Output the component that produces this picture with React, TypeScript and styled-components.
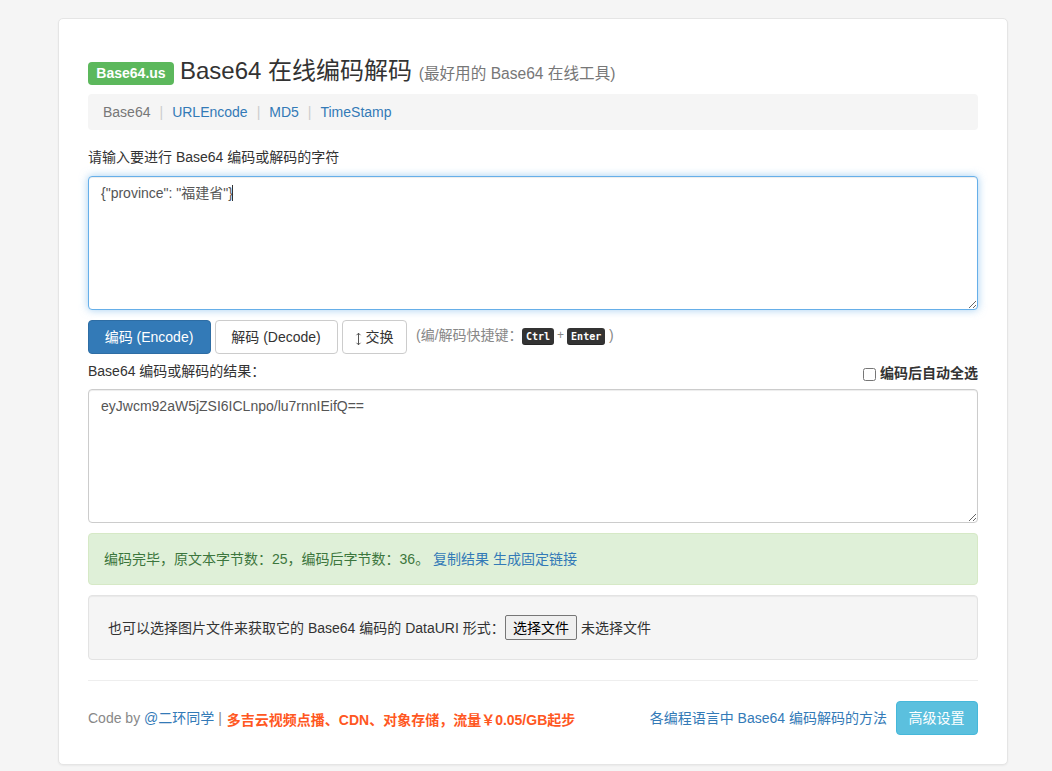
import React from "react";
import styled, { createGlobalStyle } from "styled-components";

const GlobalStyle = createGlobalStyle`
  * { box-sizing: border-box; }
  body {
    margin: 0;
    background: #f5f5f5;
    color: #333;
    font: 14px/20px "Liberation Sans", Arial, "Noto Sans CJK SC", sans-serif;
  }
  button, input { font-family: inherit; }
`;

const Page = styled.div`
  display: flow-root;
  height: 771px;
  overflow: hidden;
`;

const Panel = styled.main`
  width: 950px;
  height: 747px;
  margin: 18px 0 0 58px;
  padding: 29px;
  background: #fff;
  border: 1px solid #e5e5e5;
  border-radius: 5px;
  box-shadow: 0 1px 2px rgba(0, 0, 0, 0.05);
`;

const Header = styled.header`
  display: flex;
  align-items: flex-end;
  height: 46px;
  white-space: nowrap;
`;

const Badge = styled.span`
  width: 86px;
  height: 23px;
  margin: 0 6px 9px 0;
  border-radius: 4px;
  background: #5cb85c;
  color: #fff;
  font-weight: 700;
  line-height: 22px;
  text-align: center;
`;

const Title = styled.h1`
  margin: 0 0 6px;
  font-size: 24px;
  line-height: 28px;
  font-weight: 400;
`;

const Subtitle = styled.small`
  font-size: 15.6px;
  color: #777;
`;

const Nav = styled.nav`
  display: flex;
  align-items: center;
  height: 36px;
  padding: 0 15px;
  border-radius: 4px;
  background: #f5f5f5;
`;

const NavItem = styled.span<{ $current?: boolean }>`
  color: ${(p) => (p.$current ? "#777" : "#337ab7")};
  &:not(:first-child)::before {
    content: "|";
    padding: 0 9px;
    color: #ccc;
  }
`;

const Link = styled.a`
  color: #337ab7;
  text-decoration: none;
`;

const Label = styled.div<{ $top: number; $bottom: number }>`
  display: flex;
  justify-content: space-between;
  height: 20px;
  margin: ${(p) => p.$top}px 0 ${(p) => p.$bottom}px;
  white-space: nowrap;
`;

const Field = styled.div<{ $focused?: boolean }>`
  height: 134px;
  padding: 6px 12px;
  overflow: auto;
  resize: vertical;
  color: #555;
  background: #fff;
  border: 1px solid ${(p) => (p.$focused ? "#66afe9" : "#ccc")};
  border-radius: 4px;
  box-shadow: inset 0 1px 1px rgba(0, 0, 0, 0.075)
    ${(p) => (p.$focused ? ", 0 0 8px rgba(102, 175, 233, 0.6)" : "")};
`;

const Caret = styled.span`
  display: inline-block;
  width: 1px;
  height: 16px;
  margin: 0 0 0 -1px;
  vertical-align: -3px;
  background: #333;
`;

const Actions = styled.div`
  display: flex;
  gap: 4px;
  height: 34px;
  margin-top: 10px;
`;

const tones = {
  primary: ["#fff", "#337ab7", "#2e6da4"],
  plain: ["#333", "#fff", "#ccc"],
  info: ["#fff", "#5bc0de", "#46b8da"],
};

const Button = styled.button<{ $tone: keyof typeof tones; $width: number }>`
  display: flex;
  align-items: center;
  justify-content: center;
  flex: none;
  width: ${(p) => p.$width}px;
  height: 34px;
  padding: 0 1px 0 0;
  font-size: 14px;
  line-height: 20px;
  white-space: nowrap;
  border-radius: 4px;
  color: ${(p) => tones[p.$tone][0]};
  background: ${(p) => tones[p.$tone][1]};
  border: 1px solid ${(p) => tones[p.$tone][2]};
`;

const SwapIcon = styled.svg`
  width: 7px;
  height: 14px;
  margin: 3px 4px 0 0;
`;

const Hint = styled.span`
  display: flex;
  height: 20px;
  margin: 5px 0 0 5px;
  color: #888;
  white-space: nowrap;
`;

const HintText = styled.span<{ $width: number }>`
  width: ${(p) => p.$width}px;
`;

const Kbd = styled.kbd`
  height: 17px;
  margin-top: 3px;
  padding: 0 4px;
  border-radius: 3px;
  color: #fff;
  background: #333;
  box-shadow: inset 0 -1px 0 rgba(0, 0, 0, 0.25);
  font: bold 10px/17px "DejaVu Sans Mono", monospace;
`;

const Plus = styled.span`
  width: 13px;
  font-size: 12px;
  line-height: 21px;
  text-align: center;
`;

const AutoSelect = styled.label`
  display: flex;
  align-items: center;
  gap: 4px;
  height: 24px;
  font-weight: 700;
`;

const Checkbox = styled.input`
  width: 13px;
  height: 13px;
  margin: 3px 0 0;
`;

const Alert = styled.div`
  height: 52px;
  margin-top: 10px;
  padding: 15px;
  color: #3c763d;
  background: #dff0d8;
  border: 1px solid #d6e9c6;
  border-radius: 4px;
  white-space: nowrap;
`;

const Well = styled.div`
  display: flex;
  align-items: center;
  height: 65px;
  margin-top: 10px;
  padding: 0 19px;
  background: #f5f5f5;
  border: 1px solid #e3e3e3;
  border-radius: 4px;
  box-shadow: inset 0 1px 1px rgba(0, 0, 0, 0.05);
  white-space: nowrap;
`;

const FilePrompt = styled.span`
  width: 397px;
`;

const FileButton = styled.button`
  width: 72px;
  height: 25px;
  margin-right: 4px;
  padding: 0;
  font-size: 14px;
  line-height: 20px;
  color: #000;
  background: #efefef;
  border: 1px solid #767676;
  border-radius: 2px;
`;

const Footer = styled.footer`
  display: flex;
  align-items: center;
  height: 55px;
  margin-top: 20px;
  padding-top: 20px;
  border-top: 1px solid #eee;
  color: #888;
  white-space: nowrap;
`;

const Promo = styled.a`
  margin: 4px auto 0 5px;
  color: #ff5722;
  font-weight: 700;
`;

const Guide = styled(Link)`
  margin-right: 9px;
`;

export default function App() {
  return (
    <Page lang="zh-CN">
      <GlobalStyle />
      <Panel>
        <Header>
          <Badge>Base64.us</Badge>
          <Title>
            Base64 在线编码解码 <Subtitle>(最好用的 Base64 在线工具)</Subtitle>
          </Title>
        </Header>
        <Nav>
          <NavItem $current>Base64</NavItem>
          <NavItem>URLEncode</NavItem>
          <NavItem>MD5</NavItem>
          <NavItem>TimeStamp</NavItem>
        </Nav>
        <Label $top={17} $bottom={9}>请输入要进行 Base64 编码或解码的字符</Label>
        <Field $focused role="textbox">
          {'{"province": "福建省"}'}
          <Caret />
        </Field>
        <Actions>
          <Button $tone="primary" $width={123}>编码 (Encode)</Button>
          <Button $tone="plain" $width={123}>解码 (Decode)</Button>
          <Button $tone="plain" $width={65}>
            <SwapIcon viewBox="0 0 7 14" fill="none" stroke="#555">
              <path d="M3.5 1v12M1.5 3.2 3.5 1.2 5.5 3.2M1.5 10.8 3.5 12.8 5.5 10.8" />
            </SwapIcon>
            交换
          </Button>
          <Hint>
            <HintText $width={106}>(编/解码快捷键：</HintText>
            <Kbd>Ctrl</Kbd>
            <Plus>+</Plus>
            <Kbd>Enter</Kbd>
            <HintText $width={10}>&nbsp;)</HintText>
          </Hint>
        </Actions>
        <Label $top={7} $bottom={8}>
          <span>Base64 编码或解码的结果：</span>
          <AutoSelect>
            <Checkbox type="checkbox" />
            编码后自动全选
          </AutoSelect>
        </Label>
        <Field role="textbox">eyJwcm92aW5jZSI6ICLnpo/lu7rnnIEifQ==</Field>
        <Alert>
          编码完毕，原文本字节数：25，编码后字节数：36。 <Link>复制结果</Link> <Link>生成固定链接</Link>
        </Alert>
        <Well>
          <FilePrompt>也可以选择图片文件来获取它的 Base64 编码的 DataURI 形式：</FilePrompt>
          <FileButton>选择文件</FileButton>
          未选择文件
        </Well>
        <Footer>
          <span>
            Code by <Link>@二环同学</Link> |
          </span>
          <Promo>多吉云视频点播、CDN、对象存储，流量￥0.05/GB起步</Promo>
          <Guide>各编程语言中 Base64 编码解码的方法</Guide>
          <Button $tone="info" $width={82}>高级设置</Button>
        </Footer>
      </Panel>
    </Page>
  );
}
